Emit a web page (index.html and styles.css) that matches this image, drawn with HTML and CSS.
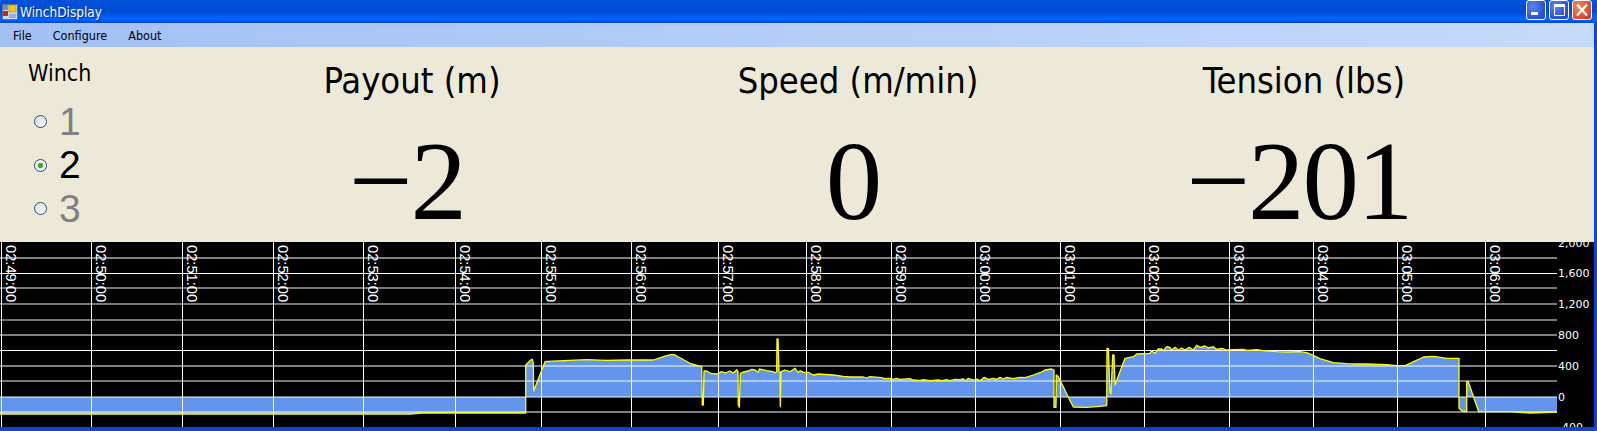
FILE: index.html
```html
<!DOCTYPE html>
<html lang="en">
<head>
<meta charset="utf-8">
<title>WinchDisplay</title>
<link rel="stylesheet" href="styles.css">
</head>
<body>
<div class="window">
  <header class="titlebar">
    <svg class="app-icon" viewBox="0 0 16 16" width="16" height="16">
      <rect x="0.5" y="0.5" width="15" height="15" fill="#cfd8e8" stroke="#5a6f96"/>
      <rect x="1" y="1" width="5" height="5" fill="#6d8fc9"/>
      <rect x="7" y="1" width="7" height="7" fill="#ffc700" stroke="#b08a10" stroke-width="0.6"/>
      <rect x="1" y="7" width="5" height="5" fill="#c8281e"/>
      <rect x="7" y="10" width="7" height="4" fill="#8fb0e0"/>
    </svg>
    <span class="title-text">WinchDisplay</span>
    <div class="caption-buttons">
      <span class="cap cap-blue">
        <svg viewBox="0 0 18 18" width="18" height="18"><rect x="4" y="11" width="7" height="3" fill="#fff"/></svg>
      </span>
      <span class="cap cap-blue">
        <svg viewBox="0 0 18 18" width="18" height="18"><rect x="4.500" y="4.500" width="10" height="10" fill="none" stroke="#fff"/><rect x="4" y="3" width="11" height="3" fill="#fff"/></svg>
      </span>
      <span class="cap cap-red">
        <svg viewBox="0 0 18 18" width="18" height="18"><path d="M4 3.500 14 14.500M14 3.500 4 14.500" stroke="#fff" stroke-width="2.200" fill="none"/></svg>
      </span>
    </div>
  </header>

  <div class="client">
    <nav class="menubar">
      <span class="menu-item">File</span>
      <span class="menu-item">Configure</span>
      <span class="menu-item">About</span>
    </nav>

    <section class="panel">
      <div class="winch">
        <div class="winch-title">Winch</div>
        <label class="radio-row off"><span class="radio"></span><span class="radio-num">1</span></label>
        <label class="radio-row"><span class="radio checked"></span><span class="radio-num">2</span></label>
        <label class="radio-row off"><span class="radio"></span><span class="radio-num">3</span></label>
      </div>
      <div class="metric">
        <div class="metric-label">Payout (m)</div>
        <div class="metric-value">−2</div>
      </div>
      <div class="metric">
        <div class="metric-label">Speed (m/min)</div>
        <div class="metric-value">0</div>
      </div>
      <div class="metric">
        <div class="metric-label">Tension (lbs)</div>
        <div class="metric-value">−201</div>
      </div>
    </section>

    <svg class="chart" viewBox="0 242 1594 185" width="1594" height="185">
      <path class="area" d="M0 397V414H410L422 413H525.700V365L530.700 360 532.300 359.300 533.300 363.300 533.700 391 545 361.700 546.700 361.300 586.700 359.700 606.700 360.300 626.700 360 653.300 360 663.300 356.700 671.700 354.300 675 355 690 363.300 701.700 366.700 702.300 405 703.300 405 704 371 706.700 371 711.700 373.700 716.700 374 721.700 371.700 725 373 730 371 733.300 373 736.700 369.700 738 371.700 738.300 405 739.300 407.300 740.300 373.300 743.300 372 748.300 371 751.700 369.300 755 370 758.300 372.300 759.300 369 766.700 370.700 773.300 371.700 775 372.700 776.700 371.700 777 339 778 339 779 371.700 780 372.700 780.300 406.700 781 371.700 785 370 790 371.700 795 368.300 798.300 372.700 800 370.700 803.300 372.300 808.300 372.300 813.300 375 818.300 374 833.300 375 843.300 376.300 850 377 863.300 377 866.700 378 870 376.700 881.700 377.700 885 378.700 890 378.300 893.300 379.300 896.700 378.300 900 379.300 910 378.700 913.300 380 920 380.300 923.300 379.700 930 380.700 938.300 380 941.700 380.700 946.700 379.700 950 380.700 955 379.300 960 379.700 963.300 379 965.700 380.700 968.300 378.300 973.300 380 976.700 379 980 380.700 984.300 377.300 988.300 379.300 993.300 378.300 996.700 379.300 1000 377.300 1003.300 379 1006.700 377.300 1013.300 378.700 1020 377.300 1025 377.700 1033.300 375 1040 372.700 1045 370 1051.700 369 1054 370 1054 407.300 1056 407.300 1056.300 375 1058.300 376.700 1063.300 386.700 1068.300 397.300 1073.300 407 1086.700 407.300 1100 406.300 1106.700 405.700 1107 348.300 1108.300 348.300 1110 391.700 1111 394 1112.700 355 1114 355 1115 385 1125 358.300 1133.300 356.700 1136.700 354 1150 353.300 1151.700 350.700 1155 353.300 1158.300 349 1161.700 349 1163.300 350.700 1166.700 346.700 1170 347.300 1171.700 350 1175 347.300 1178.300 350 1181.700 348 1185 350 1189.300 347.300 1193.300 350 1196.700 345.300 1200 347.300 1205 346 1208.300 348 1213.300 346.700 1216.700 349.300 1221.700 348.300 1226.700 350 1233.300 349.700 1243.300 349.300 1246.700 350.300 1256.700 349.700 1263.300 350.700 1276.700 351.700 1286.700 352 1300 351.700 1306.700 352.700 1313.300 355.300 1320 358.700 1326.700 360.700 1333.300 362.700 1346.700 363.700 1356.700 364 1366.700 364 1386.700 364.700 1397 365.700 1405.300 365.700 1413.700 361.700 1423.700 357 1433.700 356.300 1447 358.300 1459 358.300 1459 408.300 1462 411 1466.700 411.700 1466.700 381.700 1468.300 381.700 1478.700 411.700 1510 411.700 1530 413 1557 412V397Z"/>
      <g class="grid-gray">
        <path d="M0 258H1557M0 335H1557M0 366H1557M0 412H1557"/>
      </g>
      <g class="grid-light">
        <path d="M0 288H1557M0 304H1557M0 320H1557M0 381H1557M0 397H1557"/>
      </g>
      <g class="grid-white">
        <path d="M0 273.500H1557M0 350.500H1557M1.500 242V427M91.500 242V427M182.500 242V427M273.500 242V427M363.500 242V427M455.500 242V427M541.500 242V427M631.500 242V427M718.500 242V427M806.500 242V427M891.500 242V427M975.500 242V427M1060.500 242V427M1144.500 242V427M1229.500 242V427M1313.500 242V427M1397.500 242V427M1485.500 242V427"/>
      </g>
      <path class="trace" d="M0 414H410L422 413H525.700V365L530.700 360 532.300 359.300 533.300 363.300 533.700 391 545 361.700 546.700 361.300 586.700 359.700 606.700 360.300 626.700 360 653.300 360 663.300 356.700 671.700 354.300 675 355 690 363.300 701.700 366.700 702.300 405 703.300 405 704 371 706.700 371 711.700 373.700 716.700 374 721.700 371.700 725 373 730 371 733.300 373 736.700 369.700 738 371.700 738.300 405 739.300 407.300 740.300 373.300 743.300 372 748.300 371 751.700 369.300 755 370 758.300 372.300 759.300 369 766.700 370.700 773.300 371.700 775 372.700 776.700 371.700 777 339 778 339 779 371.700 780 372.700 780.300 406.700 781 371.700 785 370 790 371.700 795 368.300 798.300 372.700 800 370.700 803.300 372.300 808.300 372.300 813.300 375 818.300 374 833.300 375 843.300 376.300 850 377 863.300 377 866.700 378 870 376.700 881.700 377.700 885 378.700 890 378.300 893.300 379.300 896.700 378.300 900 379.300 910 378.700 913.300 380 920 380.300 923.300 379.700 930 380.700 938.300 380 941.700 380.700 946.700 379.700 950 380.700 955 379.300 960 379.700 963.300 379 965.700 380.700 968.300 378.300 973.300 380 976.700 379 980 380.700 984.300 377.300 988.300 379.300 993.300 378.300 996.700 379.300 1000 377.300 1003.300 379 1006.700 377.300 1013.300 378.700 1020 377.300 1025 377.700 1033.300 375 1040 372.700 1045 370 1051.700 369 1054 370 1054 407.300 1056 407.300 1056.300 375 1058.300 376.700 1063.300 386.700 1068.300 397.300 1073.300 407 1086.700 407.300 1100 406.300 1106.700 405.700 1107 348.300 1108.300 348.300 1110 391.700 1111 394 1112.700 355 1114 355 1115 385 1125 358.300 1133.300 356.700 1136.700 354 1150 353.300 1151.700 350.700 1155 353.300 1158.300 349 1161.700 349 1163.300 350.700 1166.700 346.700 1170 347.300 1171.700 350 1175 347.300 1178.300 350 1181.700 348 1185 350 1189.300 347.300 1193.300 350 1196.700 345.300 1200 347.300 1205 346 1208.300 348 1213.300 346.700 1216.700 349.300 1221.700 348.300 1226.700 350 1233.300 349.700 1243.300 349.300 1246.700 350.300 1256.700 349.700 1263.300 350.700 1276.700 351.700 1286.700 352 1300 351.700 1306.700 352.700 1313.300 355.300 1320 358.700 1326.700 360.700 1333.300 362.700 1346.700 363.700 1356.700 364 1366.700 364 1386.700 364.700 1397 365.700 1405.300 365.700 1413.700 361.700 1423.700 357 1433.700 356.300 1447 358.300 1459 358.300 1459 408.300 1462 411 1466.700 411.700 1466.700 381.700 1468.300 381.700 1478.700 411.700 1510 411.700 1530 413 1557 412"/>
      <g class="time-labels">
        <text transform="translate(6 245) rotate(90)">02:49:00</text>
        <text transform="translate(96 245) rotate(90)">02:50:00</text>
        <text transform="translate(187 245) rotate(90)">02:51:00</text>
        <text transform="translate(278 245) rotate(90)">02:52:00</text>
        <text transform="translate(368 245) rotate(90)">02:53:00</text>
        <text transform="translate(460 245) rotate(90)">02:54:00</text>
        <text transform="translate(546 245) rotate(90)">02:55:00</text>
        <text transform="translate(636 245) rotate(90)">02:56:00</text>
        <text transform="translate(723 245) rotate(90)">02:57:00</text>
        <text transform="translate(811 245) rotate(90)">02:58:00</text>
        <text transform="translate(896 245) rotate(90)">02:59:00</text>
        <text transform="translate(980 245) rotate(90)">03:00:00</text>
        <text transform="translate(1065 245) rotate(90)">03:01:00</text>
        <text transform="translate(1149 245) rotate(90)">03:02:00</text>
        <text transform="translate(1234 245) rotate(90)">03:03:00</text>
        <text transform="translate(1318 245) rotate(90)">03:04:00</text>
        <text transform="translate(1402 245) rotate(90)">03:05:00</text>
        <text transform="translate(1490 245) rotate(90)">03:06:00</text>
      </g>
      <g class="value-labels">
        <text x="1558" y="247">2,000</text>
        <text x="1558" y="277">1,600</text>
        <text x="1558" y="308">1,200</text>
        <text x="1558" y="339">800</text>
        <text x="1558" y="370">400</text>
        <text x="1558" y="401">0</text>
        <text x="1558" y="431">-400</text>
      </g>
    </svg>
  </div>
</div>
</body>
</html>
```

FILE: styles.css
```css
* { box-sizing: border-box; }

html, body {
  margin: 0;
  padding: 0;
  height: 100%;
  overflow: hidden;
  background: #0a3ed0;
}

.window {
  display: flex;
  flex-direction: column;
  width: 1597px;
  height: 431px;
  padding: 0 3px 4px 0;
  background: #0a46d8;
}

.titlebar {
  display: flex;
  align-items: center;
  flex: 0 0 23px;
  margin-right: -3px;
  padding-left: 2px;
  gap: 2px;
  background: linear-gradient(180deg, #0052d8 0, #0050d8 3px, #004cd4 12px, #0064ff 18px, #0060f8 20px, #0046cc 23px);
}

.title-text {
  color: #fff;
  font: 13.500px "DejaVu Sans Condensed", "DejaVu Sans", sans-serif;
  text-shadow: 1px 1px 0 #0a2a90;
}

.caption-buttons {
  display: flex;
  align-self: flex-start;
  gap: 3px;
  margin-left: auto;
  margin-right: 5px;
}

.cap {
  display: flex;
  align-items: center;
  justify-content: center;
  width: 20px;
  height: 20px;
  border: 1px solid #fff;
  border-radius: 3px;
}

.cap-blue { background: radial-gradient(circle at 30% 30%, #5a86ec, #2a50d4 70%, #2448c0); }
.cap-red { background: radial-gradient(circle at 30% 30%, #f08a68, #d84a24 70%, #c03a18); }

.client {
  display: flex;
  flex-direction: column;
  flex: 1;
  width: 1594px;
  overflow: hidden;
}

.menubar {
  display: flex;
  align-items: center;
  flex: 0 0 24px;
  padding-left: 13px;
  gap: 21px;
  background: linear-gradient(90deg, #a3c0f5, #c6daf9);
}

.menu-item {
  color: #000;
  font: 12.500px "DejaVu Sans Condensed", "DejaVu Sans", sans-serif;
}

.panel {
  display: grid;
  grid-template-columns: 189px 446px 446px 446px;
  flex: 0 0 195px;
  background: #ece9d8;
  color: #000;
}

.winch {
  display: flex;
  flex-direction: column;
  padding: 13px 0 0 28px;
}

.winch-title {
  height: 40px;
  font: 23px/26px "DejaVu Sans Condensed", "DejaVu Sans", sans-serif;
}

.radio-row {
  display: flex;
  align-items: center;
  height: 43.500px;
  gap: 12px;
  padding-left: 6px;
  font: 39px/44px "Liberation Sans", Arial, sans-serif;
}

.radio-row.off { color: #808080; }

.radio {
  display: block;
  flex: none;
  width: 13px;
  height: 13px;
  border: 1px solid #1c5180;
  border-radius: 50%;
  background: linear-gradient(135deg, #dcdcd4, #fff);
}

.radio.checked {
  background: radial-gradient(circle, #2fb12f 0, #2fb12f 2.500px, #f4f4ee 3px);
}

.metric {
  display: flex;
  flex-direction: column;
  align-items: center;
}

.metric-label {
  margin-top: 9px;
  font: 36px/50px "DejaVu Sans Condensed", "DejaVu Sans", sans-serif;
}

.metric-value {
  margin: 15px 10px 0 0;
  letter-spacing: -2px;
  font: 113px/120px "Liberation Serif", "Times New Roman", serif;
}

.chart {
  display: block;
  flex: none;
  background: #000;
}

.area { fill: #6495ed; }

.grid-gray path { fill: none; stroke: #fff; stroke-opacity: .5; stroke-width: 2; }
.grid-light path { fill: none; stroke: #fff; stroke-opacity: .62; stroke-width: 1.400; }
.grid-white path { fill: none; stroke: #fff; stroke-width: 1; }

.trace {
  fill: none;
  stroke: #ffff00;
  stroke-width: 1.300;
  stroke-linejoin: round;
}

.time-labels text {
  fill: #fff;
  font: 14.700px "Liberation Sans", Arial, sans-serif;
}

.value-labels text {
  fill: #fff;
  font: 11px "DejaVu Sans", sans-serif;
}
```
